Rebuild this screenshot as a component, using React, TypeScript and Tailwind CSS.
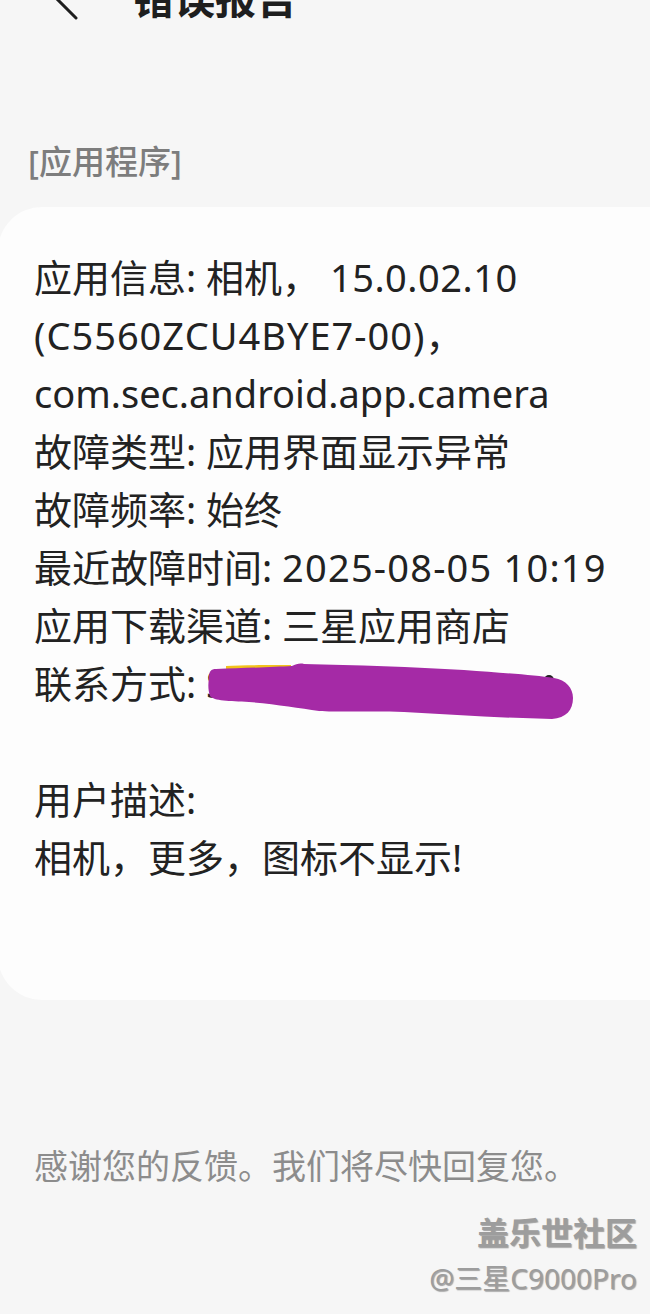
import React from 'react';

const font = 'font-["Noto_Sans","Noto_Sans_CJK_SC",sans-serif]';

const Scribble: React.FC = () => (
  <svg className="absolute left-[-2px] top-[2px]" width="375" height="70" viewBox="0 0 375 70">
    <path d="M22 10 C40 9 70 9 87 9 L87 13 L22 14 Z" fill="#f2c21b" />
    <circle cx="345" cy="24" r="5" fill="#222" />
    <path
      d="M5 22 C5 15 7 13 12 13 C40 12 70 11 88 10 C92 8 96 7 100 8 C150 9 210 11 260 14 C300 17 330 19 350 22 C362 24 369 32 369 42 C369 54 362 62 348 63 C300 62 250 59 200 56 C160 55 130 56 115 55 C95 52 70 48 45 46 C25 45 10 45 6 40 C4 34 4 28 5 22 Z"
      fill="#a52aa6"
    />
  </svg>
);

const App: React.FC = () => {
  return (
    <div className={`min-h-[1314px] overflow-hidden bg-[#f6f6f6] ${font}`}>
      <header className="-mt-[32px] flex h-[60px] items-center">
        <svg className="ml-[52px]" width="28" height="48" viewBox="0 0 28 48">
          <path d="M24 4 L4 24 L24 44" fill="none" stroke="#1e1e1e" strokeWidth="3" strokeLinecap="round" strokeLinejoin="round" />
        </svg>
        <h1 className="ml-[53px] text-[41px] font-bold leading-none text-[#1e1e1e]">错误报告</h1>
      </header>

      <div className="mt-[112px] pl-[28px] text-[33px] font-medium leading-[44px] text-[#7d7d7d]">[应用程序]</div>

      <section className="mt-[23px] -ml-[2px] -mr-[60px] rounded-[44px] bg-[#fdfdfd] pb-[114px] pl-[36px] pt-[41px] text-[38px] leading-[58px] text-[#222]">
        <div className="whitespace-nowrap">
          应用信息: 相机， <span className="tracking-[0.5px]">15.0.02.10</span>
        </div>
        <div className="whitespace-nowrap">
          <span className="tracking-[1px]">(C5560ZCU4BYE7-00)</span>，
        </div>
        <div className="whitespace-nowrap">com.sec.android.app.camera</div>
        <div className="whitespace-nowrap">故障类型: 应用界面显示异常</div>
        <div className="whitespace-nowrap">故障频率: 始终</div>
        <div className="whitespace-nowrap">
          最近故障时间: <span className="tracking-[1.2px]">2025-08-05 10:19</span>
        </div>
        <div className="whitespace-nowrap">应用下载渠道: 三星应用商店</div>
        <div className="whitespace-nowrap">
          联系方式:{' '}
          <span className="relative inline-block w-[360px]">
            S<span className="text-transparent">1234567890</span>
            <Scribble />
          </span>
        </div>
        <div className="h-[58px]" />
        <div>用户描述:</div>
        <div className="whitespace-nowrap">相机，更多，图标不显示!</div>
      </section>

      <p className="mt-[142px] pl-[34px] text-[34px] leading-[48px] text-[#8c8c8c]">感谢您的反馈。我们将尽快回复您。</p>

      <div className="mt-[21px] flex flex-col items-end pr-[13px] text-[#9d9d9d] [text-shadow:1px_1px_1px_rgba(0,0,0,0.35)]">
        <span className="text-[32px] font-bold leading-[44px]">盖乐世社区</span>
        <span className="mt-[3px] text-[28px] leading-[40px]">@三星C9000Pro</span>
      </div>
    </div>
  );
};

export default App;
